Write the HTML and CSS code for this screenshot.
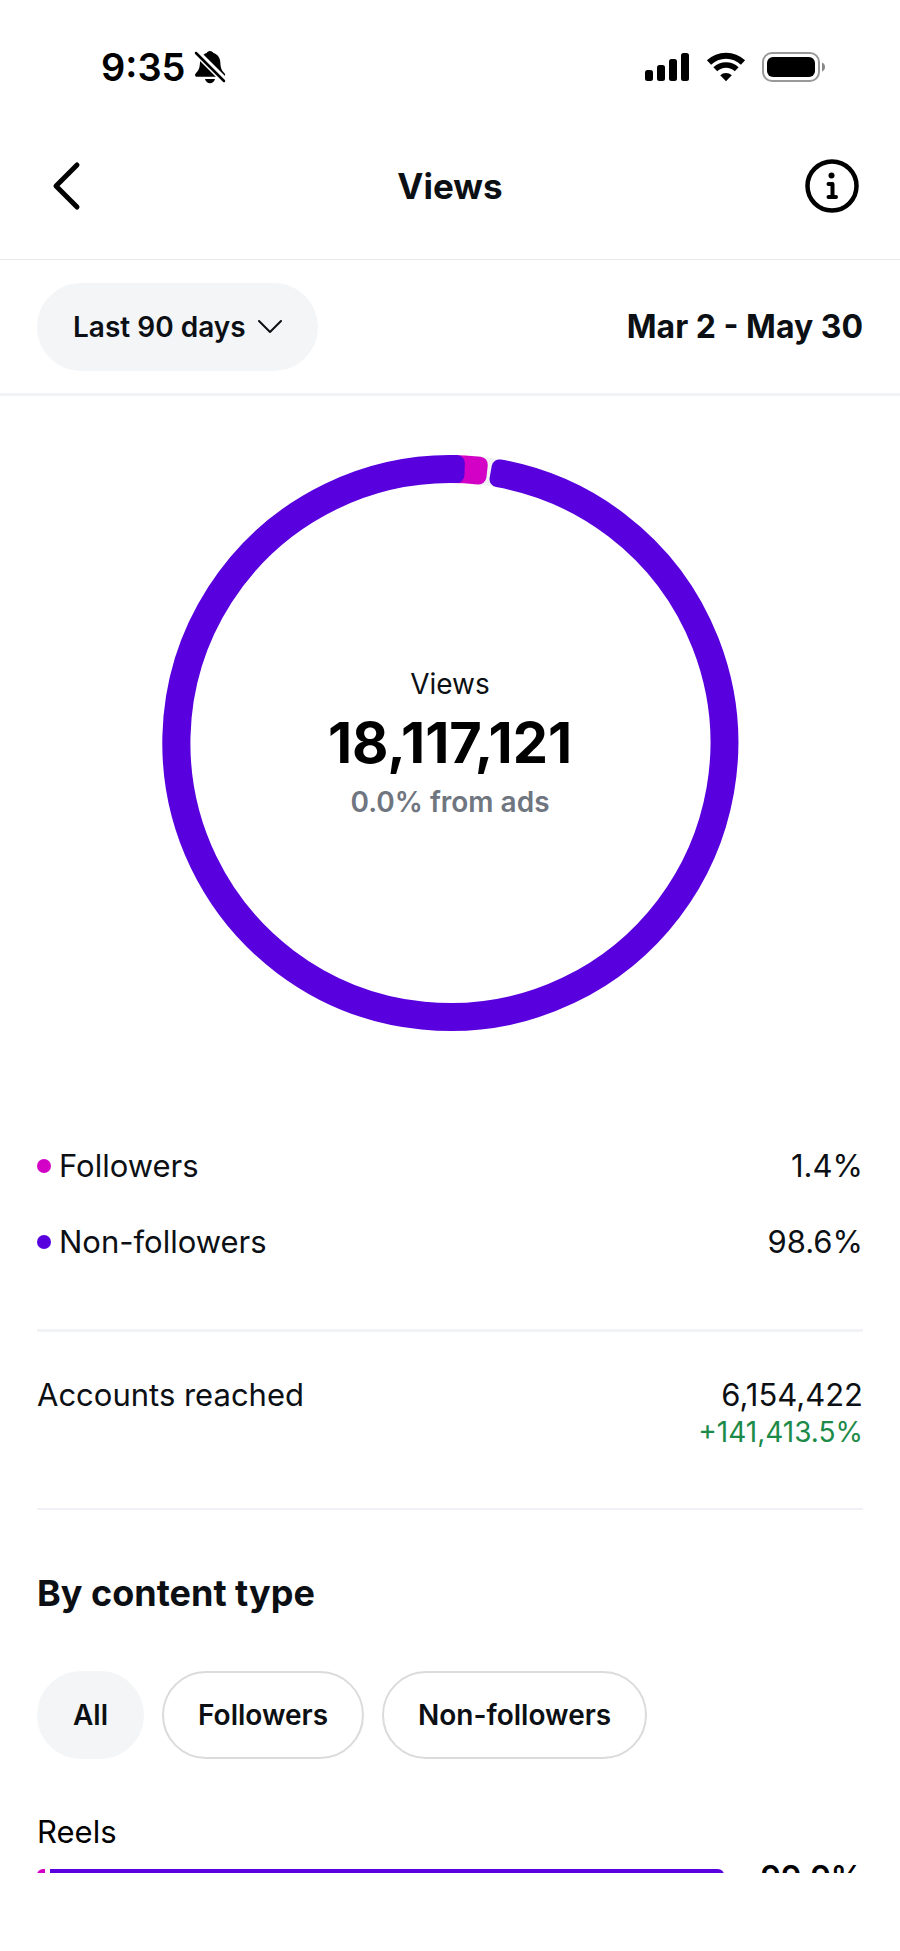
FILE: index.html
```html
<!DOCTYPE html>
<html lang="en">
<head>
	<meta charset="utf-8">
	<meta name="viewport" content="width=device-width, initial-scale=1">
	<title>Views</title>
	<link rel="stylesheet" href="styles.css">
</head>
<body>
	<div class="status-bar">
		<div class="status-left">
			<span class="time">9:35</span>
			<svg class="bell" width="32" height="34" viewBox="0 0 32 34">
				<path d="M16 1c1.8 0 3 1 3.400 2 4.400 1.400 6.600 4.600 6.900 9.200.3 5.600 1.200 8 4 10.800 1.600 1.900.7 3.800-1 3.800H3c-2 0-2.600-2.100-1-3.800 2.800-2.800 3.700-5.200 4-10.800.3-4.600 2.300-7.800 6.700-9.200C13.100 2 14.200 1 16 1z"/>
				<path d="M11 29h10c-.6 2.600-2.600 4.300-5 4.300S11.600 31.600 11 29z"/>
				<path d="M2 2l29 29" stroke="#fff" stroke-width="7"/>
				<path d="M2 3l28 28" stroke="#000" stroke-width="2.500" stroke-linecap="round"/>
			</svg>
		</div>
		<div class="status-right">
			<svg width="46" height="30" viewBox="0 0 46 30">
				<rect x="1" y="18" width="8" height="11" rx="2.500"/>
				<rect x="13" y="13" width="8" height="16" rx="2.500"/>
				<rect x="25" y="7" width="8" height="22" rx="2.500"/>
				<rect x="37" y="1" width="8" height="28" rx="2.500"/>
			</svg>
			<svg width="40" height="30" viewBox="0 0 40 30">
				<path d="M3 10.500a24.500 24.500 0 0 1 34 0" fill="none" stroke="#000" stroke-width="6"/>
				<path d="M9.300 17.300a15.500 15.500 0 0 1 21.400 0" fill="none" stroke="#000" stroke-width="5.500"/>
				<path d="M20 29.300l-5.800-6a8.300 8.300 0 0 1 11.600 0z"/>
			</svg>
			<svg width="64" height="30" viewBox="0 0 64 30">
				<rect x="1" y="1" width="56" height="28" rx="9" fill="none" stroke="#999" stroke-width="2"/>
				<rect x="5" y="5" width="48" height="20" rx="6"/>
				<path d="M60 10.500c4 1.500 4 7.500 0 9z" fill="#888"/>
			</svg>
		</div>
	</div>

	<header class="header">
		<button class="icon-btn" aria-label="Back">
			<svg width="54" height="54" viewBox="0 0 54 54" fill="none" stroke="#000" stroke-width="5" stroke-linecap="round" stroke-linejoin="round">
				<path d="M36 6L15 27l21 21"/>
			</svg>
		</button>
		<h1>Views</h1>
		<button class="icon-btn" aria-label="Info">
			<svg width="54" height="54" viewBox="0 0 54 54" fill="none" stroke="#000" stroke-width="4" stroke-linecap="round" stroke-linejoin="round">
				<circle cx="27" cy="27" r="24.500" stroke-width="4.500"/>
				<circle cx="26.500" cy="16.500" r="3" fill="#000" stroke="none"/>
				<path d="M23.500 25h4v13M23.500 38h7.500"/>
			</svg>
		</button>
	</header>

	<div class="filter">
		<button class="pill pill-on">Last 90 days
			<svg width="24" height="14" viewBox="0 0 24 14" fill="none" stroke="#0c1014" stroke-width="2" stroke-linecap="round" stroke-linejoin="round">
				<path d="M1 1l11 11L23 1"/>
			</svg>
		</button>
		<span class="range">Mar 2 - May 30</span>
	</div>

	<main class="content">
		<div class="chart">
			<svg class="ring" viewBox="0 0 580 580">
				<path d="M313.900 17A274 274 0 0 1 338.500 20.300" fill="none" stroke="#f0f2f5"/>
				<path class="arc-followers" d="M290 10A280 280 0 0 1 319.800 11.600L318.500 23.500A268 268 0 0 0 290 22z"/>
				<path class="arc-others" d="M339.600 14.400A280 280 0 1 1 296.800 10.100L296.500 22.100A268 268 0 1 0 337.500 26.200z"/>
			</svg>
			<div class="chart-text">
				<span class="chart-label">Views</span>
				<strong class="chart-total">18,117,121</strong>
				<span class="chart-ads">0.0% from ads</span>
			</div>
		</div>

		<ul class="legend">
			<li><span class="name"><i class="dot dot-followers"></i>Followers</span><span>1.4%</span></li>
			<li><span class="name"><i class="dot dot-others"></i>Non-followers</span><span>98.6%</span></li>
		</ul>

		<div class="reached">
			<span>Accounts reached</span>
			<div class="reached-value">
				<span>6,154,422</span>
				<span class="up">+141,413.5%</span>
			</div>
		</div>

		<section class="types">
			<h2>By content type</h2>
			<div class="pills">
				<button class="pill pill-on">All</button>
				<button class="pill">Followers</button>
				<button class="pill">Non-followers</button>
			</div>
			<div class="type-name">Reels</div>
			<div class="type-row">
				<div class="bar"><i class="bar-followers"></i><i class="bar-others"></i></div>
				<span class="type-value">99.9%</span>
			</div>
		</section>
	</main>
</body>
</html>
```

FILE: styles.css
```css
* {
	margin: 0;
	padding: 0;
	box-sizing: border-box;
}
body {
	display: flex;
	flex-direction: column;
	height: 100vh;
	padding-bottom: 78px;
	background: #fff;
	color: #0c1014;
	font: 31px/38px Inter, "Liberation Sans", sans-serif;
}
button {
	border: none;
	background: none;
	color: inherit;
	font: inherit;
	cursor: pointer;
}
svg {
	display: block;
}
ul {
	list-style: none;
}

/* status bar */
.status-bar {
	display: flex;
	justify-content: space-between;
	flex: none;
	height: 112px;
	padding: 22px 74px 0 101px;
	color: #000;
}
.status-left,
.status-right {
	display: flex;
	align-items: center;
	height: 90px;
}
.status-left {
	gap: 8px;
}
.status-right {
	gap: 16px;
}
.time {
	font-size: 38px;
	font-weight: 600;
}

/* header */
.header {
	display: flex;
	align-items: center;
	justify-content: space-between;
	flex: none;
	height: 148px;
	padding: 0 41px;
	border-bottom: 1px solid #e8e8e8;
}
.header h1 {
	font-size: 35px;
	font-weight: 700;
}
.filter {
	display: flex;
	align-items: center;
	justify-content: space-between;
	flex: none;
	height: 136px;
	padding: 0 37px;
	border-bottom: 3px solid #f2f3f7;
}
.range {
	font-size: 32px;
	font-weight: 700;
}
.pill {
	display: flex;
	align-items: center;
	gap: 12px;
	height: 88px;
	padding: 0 34px;
	border: 2px solid #dbdbdb;
	border-radius: 44px;
	font-size: 28px;
	font-weight: 600;
}
.pill-on {
	border-color: #f3f5f7;
	background: #f3f5f7;
}

/* content, cut off by the bottom edge */
.content {
	flex: 1;
	min-height: 0;
	overflow: hidden;
	padding: 57px 37px 0;
}
.chart {
	position: relative;
	max-width: 580px;
	margin: 0 auto 114px;
}
.ring path {
	stroke-width: 16;
	stroke-linejoin: round;
}
.ring path:first-child {
	stroke-width: 28;
}
.ring .arc-followers {
	fill: #d300c5;
	stroke: #d300c5;
}
.ring .arc-others {
	fill: #5800de;
	stroke: #5800de;
}
.chart-text {
	position: absolute;
	inset: 0;
	display: flex;
	flex-direction: column;
	align-items: center;
	justify-content: center;
}
.chart-label,
.chart-ads,
.up {
	font-size: 28px;
}
.chart-total {
	color: #000;
	font-size: 56px;
	font-weight: 700;
	line-height: 80px;
}
.chart-ads {
	color: #6f7680;
	font-weight: 600;
}
.legend li,
.reached {
	display: flex;
	justify-content: space-between;
}
.legend li + li {
	margin-top: 38px;
}
.name {
	display: flex;
	align-items: center;
	gap: 8px;
}
.dot {
	width: 14px;
	height: 14px;
	border-radius: 50%;
}
.dot-followers,
.bar-followers {
	background: #d300c5;
}
.dot-others,
.bar-others {
	background: #5800de;
}
.reached {
	margin-top: 68px;
	padding: 44px 0 58px;
	border-top: 3px solid #f2f3f7;
	border-bottom: 2px solid #f0f1f7;
}
.reached-value {
	display: flex;
	flex-direction: column;
	align-items: flex-end;
}
.up {
	color: #1c8a48;
	line-height: 36px;
}
.types h2 {
	margin: 61px 0 56px;
	font-size: 36px;
	font-weight: 700;
	line-height: 44px;
}
.pills {
	display: flex;
	gap: 18px;
}
.type-name {
	margin: 54px 0 8px;
	color: #000;
}
.type-row {
	display: flex;
	align-items: center;
	justify-content: space-between;
	gap: 36px;
}
.bar {
	display: flex;
	flex: 1;
	gap: 5px;
	height: 18px;
	border-radius: 6px;
	overflow: hidden;
}
.bar-followers {
	width: 8px;
}
.bar-others {
	flex: 1;
}
.type-value {
	color: #000;
	font-size: 32px;
	font-weight: 600;
}
```
